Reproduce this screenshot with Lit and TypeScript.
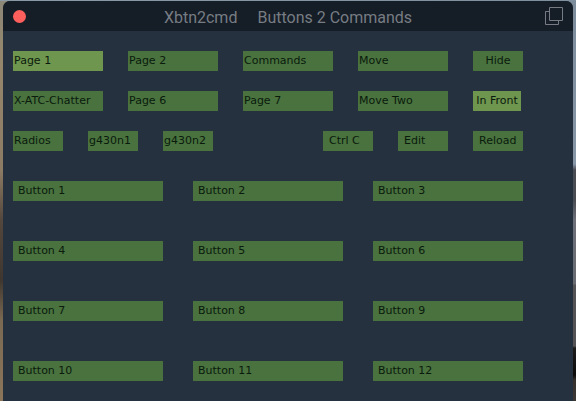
import { LitElement, html, css } from "lit";
import { customElement, state } from "lit/decorators.js";
import { classMap } from "lit/directives/class-map.js";

@customElement("app-root")
export class AppRoot extends LitElement {
  static styles = css`
    :host {
      display: block;
      box-sizing: border-box;
      min-height: 100vh;
      padding: 1px 3px 0;
      background:
        linear-gradient(90deg, #8a9aa6, #7f909e) top / 100% 1px no-repeat,
        linear-gradient(#8d8877 0, #95866c 60px, #8d7c64 170px, #54473d 220px, #3f372f 280px, #7b6952 320px, #8a755a 100%)
          left / 50% 100% no-repeat,
        linear-gradient(#7d8c9b 0, #8797a8 164px, #4a4c54 170px, #4a4c54 200px, #6d7078 220px, #696b73 284px, #545457 285px, #545457 346px, #1c1c1c 348px, #0c0c0c 375px, #34302e 380px, #3b3836 100%)
          right / 50% 100% no-repeat;
    }
    .window {
      display: flex;
      flex-direction: column;
      min-height: calc(100vh - 1px);
      border-radius: 7px 7px 0 0;
      overflow: hidden;
      background: #26313f;
    }
    .titlebar {
      display: grid;
      grid-template-columns: 20px 1fr 20px;
      align-items: center;
      height: 30px;
      padding: 0 10px;
      background: #151d26;
    }
    .title {
      display: flex;
      justify-content: center;
      gap: 20px;
      margin: 0;
      padding-top: 4px;
      font: 400 16px/20px Roboto, sans-serif;
      color: #777c83;
      white-space: nowrap;
    }
    button {
      box-sizing: border-box;
      margin: 0;
      padding: 0;
      border: 0;
      border-radius: 0;
      background: none;
      cursor: pointer;
    }
    .close {
      width: 13px;
      height: 13px;
      border-radius: 50%;
      background: #fd605c;
    }
    .popout {
      display: flex;
      justify-self: end;
    }
    .body {
      display: flex;
      flex-direction: column;
      gap: 20px;
      padding: 20px 50px 20px 10px;
    }
    .row {
      display: grid;
      grid-template-columns: repeat(4, 1fr) 50px;
      gap: 25px;
    }
    .tools {
      display: flex;
      gap: 25px;
    }
    .spacer {
      flex: 1;
    }
    .pads {
      display: grid;
      grid-template-columns: repeat(3, 1fr);
      gap: 40px 30px;
      margin-top: 10px;
    }
    .key {
      height: 20px;
      padding: 0 1px;
      background: #49723f;
      color: #0a1a0c;
      font: 11px/20px "DejaVu Sans", sans-serif;
      text-align: left;
      white-space: nowrap;
    }
    .key.on {
      background: #6f964f;
    }
    .small {
      width: 50px;
    }
    .pads .key {
      padding: 0 5px;
    }
    .inset {
      padding: 0 6px;
    }
    .middle {
      text-align: center;
    }
    .snug {
      width: 48px;
    }
  `;

  @state() private page = "Page 1";
  @state() private inFront = true;

  private pageKey(name: string, small = false) {
    return html`<button
      class=${classMap({ key: true, small, on: this.page === name })}
      @click=${() => (this.page = name)}
    >${name}</button>`;
  }

  render() {
    return html`
      <main class="window">
        <header class="titlebar">
          <button class="close" aria-label="Close"></button>
          <h1 class="title"><span>Xbtn2cmd</span><span>Buttons 2 Commands</span></h1>
          <button class="popout" aria-label="Pop out">
            <svg width="19" height="19" viewBox="0 0 19 19" fill="none" stroke="#777c83">
              <path d="M5.5 .5h13v13h-13z" />
              <path d="M5 4.5H1.5v13h13V14" />
            </svg>
          </button>
        </header>
        <div class="body">
          <div class="row">
            ${["Page 1", "Page 2", "Commands", "Move"].map((n) => this.pageKey(n))}
            <button class="key small middle">Hide</button>
          </div>
          <div class="row">
            ${["X-ATC-Chatter", "Page 6", "Page 7", "Move Two"].map((n) => this.pageKey(n))}
            <button
              class=${classMap({ key: true, snug: true, middle: true, on: this.inFront })}
              @click=${() => (this.inFront = !this.inFront)}
            >In Front</button>
          </div>
          <div class="tools">
            ${["Radios", "g430n1", "g430n2"].map((n) => this.pageKey(n, true))}
            <span class="spacer"></span>
            ${["Ctrl C", "Edit", "Reload"].map((n) => html`<button class="key small inset">${n}</button>`)}
          </div>
          <div class="pads">
            ${Array.from({ length: 12 }, (_, i) => html`<button class="key">Button ${i + 1}</button>`)}
          </div>
        </div>
      </main>
    `;
  }
}
